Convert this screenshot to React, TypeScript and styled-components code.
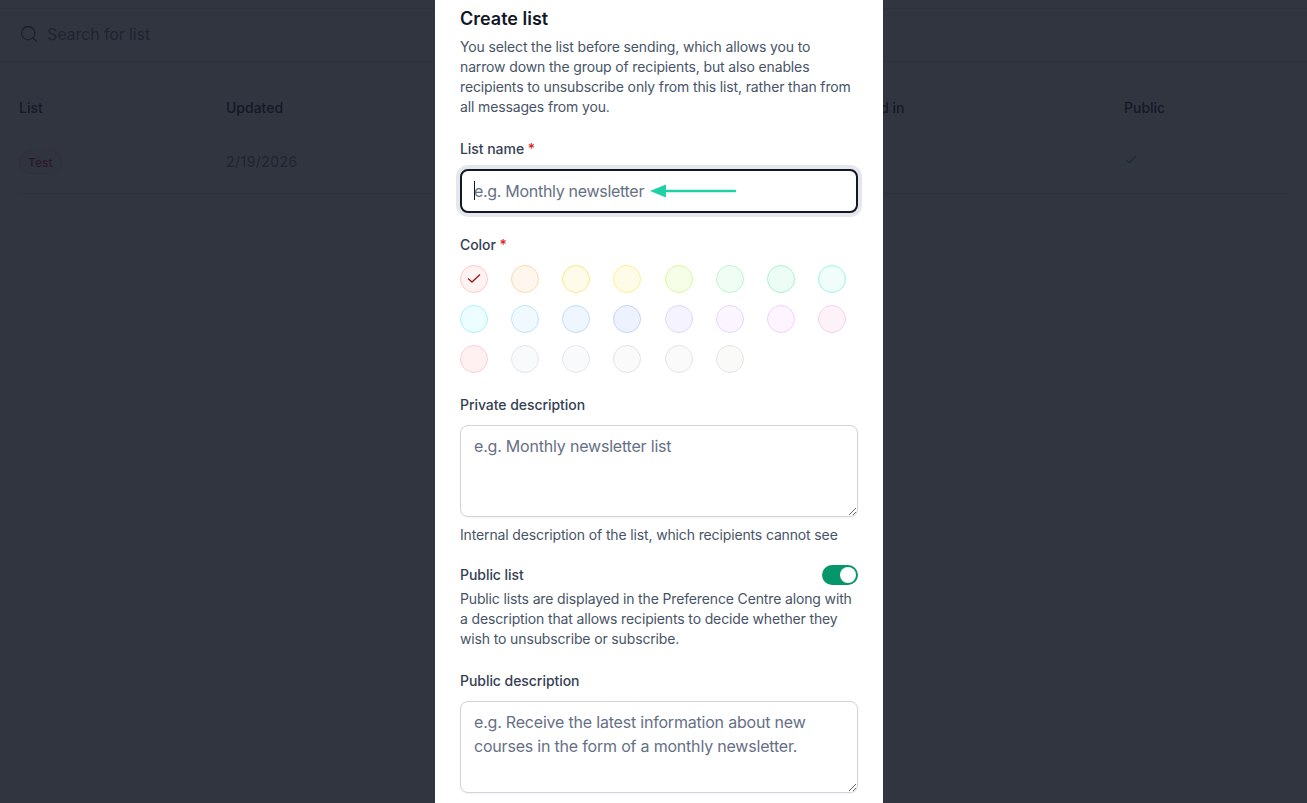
import React from "react";
import styled, { createGlobalStyle } from "styled-components";
import { Search, Check } from "lucide-react";

const swatches = [
  ["#fef2f2", "#fecaca"],
  ["#fff7ed", "#fed7aa"],
  ["#fffbeb", "#fde68a"],
  ["#fefce8", "#fef08a"],
  ["#f7fee7", "#d9f99d"],
  ["#f0fdf4", "#bbf7d0"],
  ["#ecfdf5", "#a7f3d0"],
  ["#f0fdfa", "#99f6e4"],
  ["#ecfeff", "#a5f3fc"],
  ["#f0f9ff", "#bae6fd"],
  ["#eff6ff", "#bfdbfe"],
  ["#eef2ff", "#c7d2fe"],
  ["#f5f3ff", "#ddd6fe"],
  ["#faf5ff", "#e9d5ff"],
  ["#fdf4ff", "#f5d0fe"],
  ["#fdf2f8", "#fbcfe8"],
  ["#fff1f2", "#fecdd3"],
  ["#f8fafc", "#e2e8f0"],
  ["#f9fafb", "#e5e7eb"],
  ["#fafafa", "#e4e4e7"],
  ["#fafafa", "#e5e5e5"],
  ["#fafaf9", "#e7e5e4"],
];

export default function App() {
  return (
    <>
      <GlobalStyle />
      <Page>
        <SearchBar>
          <Search size={20} strokeWidth={1.6} color="#4b5563" />
          <SearchText>Search for list</SearchText>
        </SearchBar>
        <TableHead>
          <HeadCell>List</HeadCell>
          <HeadCell>Updated</HeadCell>
          <HeadCell />
          <HeadCell />
          <HeadCell>Used in</HeadCell>
          <HeadCell>Public</HeadCell>
        </TableHead>
        <TableRow>
          <div>
            <Badge>Test</Badge>
          </div>
          <DateCell>2/19/2026</DateCell>
          <div />
          <div />
          <div />
          <PublicCell>
            <Check size={14} strokeWidth={1.8} color="#059669" />
          </PublicCell>
        </TableRow>
      </Page>
      <Overlay>
        <Modal>
          <Title>Create list</Title>
          <Description>
            You select the list before sending, which allows you to narrow down the group of recipients, but also enables
            recipients to unsubscribe only from this list, rather than from all messages from you.
          </Description>

          <NameLabel>
            List name <Required>*</Required>
          </NameLabel>
          <NameField>
            <NameInput placeholder="e.g. Monthly newsletter" />
            <Caret />
            <Arrow width="90" height="14" viewBox="0 0 90 14">
              <path d="M14 7H86" stroke="#1fd1a5" strokeWidth="2.4" strokeLinecap="round" />
              <path d="M1 7L17 0.5V13.5Z" fill="#1fd1a5" />
            </Arrow>
          </NameField>

          <ColorLabel>
            Color <Required>*</Required>
          </ColorLabel>
          <SwatchGrid>
            {swatches.map(([fill, border], i) => (
              <Swatch key={fill + border} $fill={fill} $border={border}>
                {i === 0 && (
                  <svg width="16" height="16" viewBox="0 0 16 16" fill="none">
                    <path d="M2 7.5L6 11L14 3.5" stroke="#991b1b" strokeWidth="1.3" />
                  </svg>
                )}
              </Swatch>
            ))}
          </SwatchGrid>

          <PrivateLabel>Private description</PrivateLabel>
          <TextArea placeholder="e.g. Monthly newsletter list" />
          <Helper>Internal description of the list, which recipients cannot see</Helper>

          <ToggleRow>
            <RowLabel>Public list</RowLabel>
            <Toggle>
              <Knob />
            </Toggle>
          </ToggleRow>
          <ToggleText>
            Public lists are displayed in the Preference Centre along with a description that allows recipients to decide
            whether they wish to unsubscribe or subscribe.
          </ToggleText>

          <PublicLabel>Public description</PublicLabel>
          <TextArea placeholder="e.g. Receive the latest information about new courses in the form of a monthly newsletter." />
        </Modal>
      </Overlay>
    </>
  );
}

const GlobalStyle = createGlobalStyle`
  html, body {
    margin: 0;
    height: 100%;
    overflow: hidden;
    background: #ffffff;
    font-family: Inter, "Liberation Sans", sans-serif;
    color: #111827;
  }

  * {
    box-sizing: border-box;
  }
`;

const Page = styled.div`
  height: 803px;
  padding-top: 8px;
`;

const SearchBar = styled.div`
  display: flex;
  align-items: center;
  gap: 8px;
  height: 54px;
  padding: 0 19px 2px;
  border-top: 1px solid #e5e7eb;
  border-bottom: 1px solid #e5e7eb;
`;

const SearchText = styled.span`
  font-size: 16px;
  letter-spacing: -0.1px;
  color: #6b7280;
`;

const TableHead = styled.div`
  display: grid;
  grid-template-columns: 207px 207px 207px 214px 270px 1fr;
  align-items: center;
  height: 70px;
  margin-top: 10px;
  padding-left: 19px;
`;

const HeadCell = styled.div`
  font-size: 14px;
  font-weight: 500;
  color: #111827;
`;

const TableRow = styled.div`
  display: grid;
  grid-template-columns: 207px 207px 207px 214px 270px 1fr;
  align-items: start;
  height: 52px;
  margin: 0 19px;
  padding-top: 8px;
  border-bottom: 1px solid #e5e7eb;
`;

const Badge = styled.span`
  display: inline-flex;
  align-items: center;
  height: 24px;
  padding: 0 8px;
  font-size: 12px;
  font-weight: 500;
  color: #be123c;
  background: #fff1f2;
  border: 1px solid #fecdd3;
  border-radius: 12px;
`;

const DateCell = styled.div`
  font-size: 14px;
  line-height: 24px;
  letter-spacing: 0.45px;
  color: #6b7280;
`;

const PublicCell = styled.div`
  display: flex;
  align-items: center;
  height: 20px;
`;

const Overlay = styled.div`
  position: fixed;
  inset: 0;
  display: flex;
  padding-left: 435px;
  overflow: hidden;
  background: rgba(19, 25, 37, 0.88);
`;

const Modal = styled.div`
  width: 448px;
  height: 1000px;
  padding: 5px 25px 0;
  background: #ffffff;
`;

const Title = styled.h2`
  margin: 0;
  font-size: 18px;
  line-height: 28px;
  font-weight: 600;
  color: #111827;
`;

const Description = styled.p`
  margin: 4px 0 0;
  font-size: 14px;
  line-height: 20px;
  letter-spacing: -0.14px;
  color: #475467;
`;

const RowLabel = styled.div`
  font-size: 14px;
  line-height: 20px;
  font-weight: 550;
  letter-spacing: -0.05px;
  color: #344054;
`;

const NameLabel = styled(RowLabel)`
  margin-top: 22px;
`;

const ColorLabel = styled(RowLabel)`
  margin-top: 22px;
`;

const PrivateLabel = styled(RowLabel)`
  margin-top: 22px;
`;

const PublicLabel = styled(RowLabel)`
  margin-top: 22px;
`;

const Required = styled.span`
  color: #dc2626;
`;

const NameField = styled.div`
  position: relative;
  margin-top: 10px;
`;

const NameInput = styled.input`
  display: block;
  width: 100%;
  height: 44px;
  padding: 0 12px 1px;
  font-family: inherit;
  font-size: 16px;
  letter-spacing: -0.3px;
  color: #111827;
  background: #ffffff;
  border: 2px solid #111827;
  border-radius: 8px;
  box-shadow: 0 0 0 4px #e5e7eb;
  outline: none;

  &::placeholder {
    color: #667085;
    opacity: 1;
  }
`;

const Caret = styled.span`
  position: absolute;
  left: 14px;
  top: 12px;
  width: 1px;
  height: 19px;
  background: #111827;
`;

const Arrow = styled.svg`
  position: absolute;
  left: 189px;
  top: 15px;
`;

const SwatchGrid = styled.div`
  display: grid;
  grid-template-columns: repeat(8, 28px);
  column-gap: 23.15px;
  row-gap: 12px;
  margin-top: 10px;
`;

const Swatch = styled.div<{ $fill: string; $border: string }>`
  display: flex;
  align-items: center;
  justify-content: center;
  width: 28px;
  height: 28px;
  background: ${({ $fill }) => $fill};
  border: 1px solid ${({ $border }) => $border};
  border-radius: 50%;
`;

const TextArea = styled.textarea`
  display: block;
  width: 100%;
  height: 92px;
  margin-top: 10px;
  padding: 8px 13px;
  font-family: inherit;
  font-size: 16px;
  line-height: 24px;
  letter-spacing: -0.2px;
  color: #111827;
  background: #ffffff;
  border: 1px solid #cfd4de;
  border-radius: 8px;
  box-shadow: 0 1px 2px rgba(0, 0, 0, 0.05);
  outline: none;

  &::placeholder {
    color: #667085;
    opacity: 1;
  }
`;

const Helper = styled.p`
  margin: 8px 0 0;
  font-size: 14px;
  line-height: 20px;
  letter-spacing: -0.14px;
  color: #475467;
`;

const ToggleRow = styled.div`
  display: flex;
  align-items: center;
  justify-content: space-between;
  margin-top: 20px;
`;

const Toggle = styled.div`
  display: flex;
  align-items: center;
  justify-content: flex-end;
  width: 36px;
  height: 20px;
  padding: 2px;
  background: #059669;
  border-radius: 10px;
`;

const Knob = styled.span`
  width: 16px;
  height: 16px;
  background: #ffffff;
  border-radius: 50%;
`;

const ToggleText = styled.p`
  margin: 4px 0 0;
  font-size: 14px;
  line-height: 20px;
  letter-spacing: -0.14px;
  color: #475467;
`;
